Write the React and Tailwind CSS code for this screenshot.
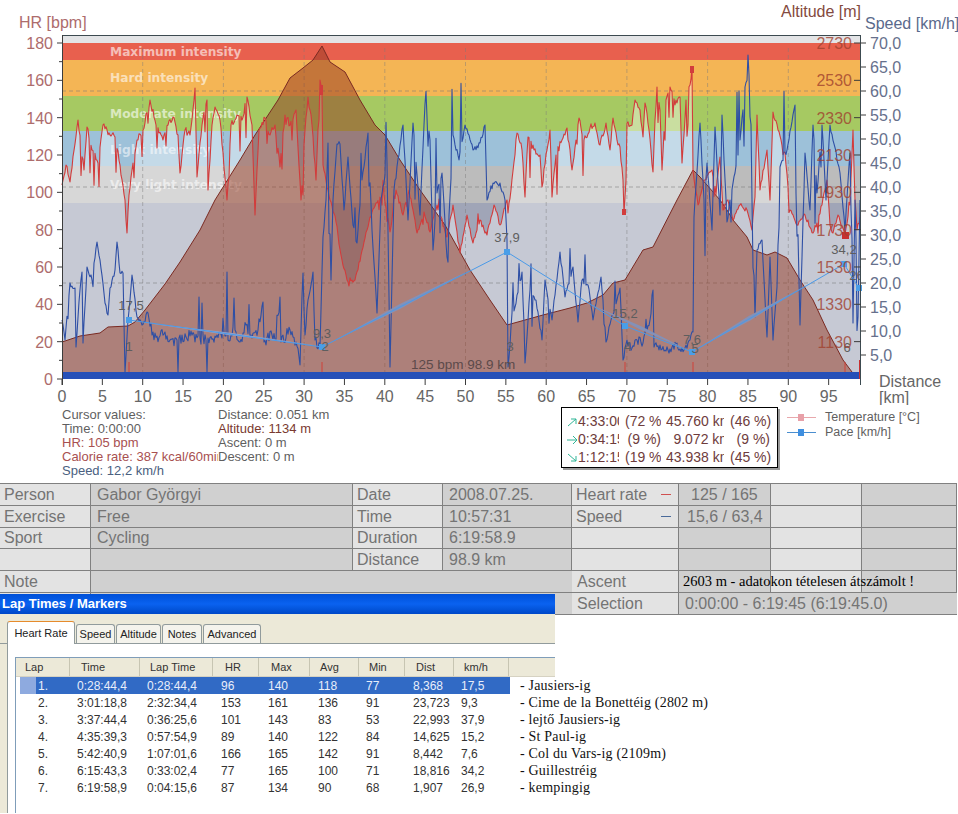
import React from 'react';

const PLOT = { left: 62, right: 861, top: 35, bottom: 379 };

const BANDS = [
  { y: 36, h: 7, fill: '#e3e4e6' },
  { y: 43, h: 17, fill: '#e8604e' },
  { y: 60, h: 36, fill: '#f4b555' },
  { y: 96, h: 35, fill: '#a6c962' },
  { y: 131, h: 35, fill: '#9dc1d9' },
  { y: 166, h: 37, fill: '#bcbcbc' },
  { y: 203, h: 176, fill: '#a0a5b7' },
];

const ZONE_LABELS = [
  { text: 'Maximum intensity', y: 56, o: 0.6 },
  { text: 'Hard intensity', y: 82, o: 0.6 },
  { text: 'Moderate intensity', y: 118, o: 0.6 },
  { text: 'Light intensity', y: 154, o: 0.55 },
  { text: 'Very light intensity', y: 189, o: 0.55 },
];

const ALTITUDE = [[62,342],[80,336],[100,333],[108,327],[128,326],[135,322],[145,310],[165,284],[180,262],[200,230],[215,200],[240,160],[255,135],[278,100],[290,78],[303,68],[313,60],[322,46],[330,62],[345,72],[360,100],[375,125],[385,135],[400,160],[420,190],[445,225],[470,270],[490,300],[507,325],[525,320],[543,315],[570,308],[587,303],[603,295],[613,283],[625,280],[643,250],[653,247],[677,200],[693,170],[700,177],[720,200],[727,210],[733,220],[747,237],[753,250],[767,255],[775,252],[787,258],[800,280],[813,300],[827,330],[843,360],[852,372]];

const HR_KEYS = [[62,185],[66,165],[70,182],[78,120],[84,170],[87,127],[92,150],[98,163],[103,125],[110,135],[115,137],[120,165],[125,200],[127,233],[129,195],[132,170],[137,140],[143,130],[150,100],[156,125],[163,140],[168,125],[173,117],[178,135],[180,173],[185,130],[190,135],[195,88],[197,177],[202,125],[207,100],[208,190],[212,125],[215,107],[220,120],[227,200],[231,125],[237,115],[242,120],[247,97],[252,125],[255,215],[259,130],[265,118],[270,135],[275,125],[280,167],[285,115],[290,125],[296,110],[301,200],[305,130],[308,97],[312,125],[316,180],[320,80],[322,95],[323,165],[330,200],[336,222],[341,255],[347,280],[355,280],[361,255],[367,230],[372,212],[377,203],[384,195],[390,232],[396,190],[403,215],[409,190],[417,233],[424,212],[430,232],[437,205],[447,237],[453,205],[460,253],[467,215],[473,243],[480,220],[487,235],[494,205],[500,225],[507,200],[508,213],[511,190],[517,133],[522,150],[525,197],[528,137],[534,150],[540,155],[542,187],[547,150],[550,130],[552,197],[556,155],[562,140],[567,128],[572,170],[576,140],[579,118],[584,140],[590,128],[595,123],[600,145],[606,123],[610,150],[613,118],[618,145],[620,147],[623,180],[624,213],[626,180],[627,123],[632,125],[635,100],[640,110],[643,137],[645,103],[649,130],[653,172],[655,120],[657,87],[660,110],[662,170],[666,100],[670,87],[675,105],[680,97],[682,163],[686,100],[690,85],[692,67],[693,170],[698,205],[704,180],[712,170],[716,195],[720,157],[723,210],[728,200],[733,220],[740,205],[747,210],[752,230],[755,197],[757,115],[760,190],[767,150],[770,200],[773,112],[778,130],[785,153],[790,210],[797,225],[805,215],[813,233],[817,223],[822,205],[827,180],[830,225],[833,233],[838,215],[845,235],[850,205],[853,130],[855,200],[857,230],[860,217]];

const SPEED_KEYS = [[62,320],[65,340],[70,283],[75,288],[76,347],[80,290],[82,272],[83,343],[87,267],[92,280],[97,242],[100,260],[105,303],[108,315],[110,288],[115,270],[117,242],[120,273],[123,273],[125,372],[128,320],[132,275],[137,317],[142,325],[148,313],[152,335],[160,336],[165,332],[170,340],[177,340],[178,372],[179,338],[190,336],[198,336],[199,297],[200,338],[206,340],[207,372],[208,338],[222,338],[226,336],[227,272],[228,340],[235,330],[240,342],[246,325],[252,338],[258,330],[263,302],[264,342],[272,335],[276,340],[280,297],[281,342],[290,330],[296,342],[300,365],[301,330],[303,273],[305,335],[308,300],[313,272],[315,340],[320,347],[323,237],[326,200],[328,143],[331,280],[333,200],[337,144],[340,144],[344,210],[348,157],[353,225],[357,243],[362,180],[368,133],[372,230],[377,313],[381,200],[387,163],[390,367],[394,190],[403,125],[408,220],[413,123],[420,215],[425,104],[430,140],[433,250],[437,193],[442,173],[447,257],[453,135],[459,160],[465,125],[473,150],[480,143],[485,125],[487,200],[493,183],[500,183],[505,200],[507,240],[508,367],[510,345],[512,313],[515,307],[522,272],[525,363],[530,290],[536,300],[542,340],[545,280],[552,320],[560,252],[565,297],[573,267],[578,322],[582,280],[588,285],[593,320],[601,277],[606,342],[611,320],[620,288],[623,360],[627,340],[632,348],[637,340],[643,343],[650,320],[653,290],[654,347],[660,345],[668,350],[676,344],[684,350],[690,340],[693,332],[694,217],[695,200],[700,123],[704,200],[707,163],[712,230],[715,127],[720,215],[722,115],[727,222],[730,200],[735,173],[740,140],[745,87],[749,75],[752,200],[755,317],[757,250],[762,240],[767,337],[770,257],[773,340],[777,287],[780,167],[787,150],[795,105],[800,325],[805,153],[810,210],[813,125],[817,193],[822,125],[826,200],[830,125],[840,173],[845,230],[850,153],[853,323],[855,200],[858,317],[860,200]];

const PACE = [[129,320],[322,347],[507,252],[625,326],[692,352],[844,264],[859,288]];

const PACE_SHADE = [
  { a: [140,322], b: [320,346], w: 2.5, fill: '#93a3cd' },
  { a: [330,343], b: [470,270], w: 4.5, fill: '#8491b8' },
  { a: [590,304], b: [692,352], w: 3.5, fill: '#8491b8' },
  { a: [695,350], b: [805,286], w: 4.5, fill: '#8491b8' },
];

const LAP_MARKS = [
  { x: 131, y: 310, text: '17,5' }, { x: 129, y: 351, text: '1' },
  { x: 322, y: 338, text: '9,3' }, { x: 325, y: 351, text: '2' },
  { x: 507, y: 242, text: '37,9' }, { x: 510, y: 351, text: '3' },
  { x: 625, y: 318, text: '15,2' }, { x: 628, y: 351, text: '4' },
  { x: 692, y: 344, text: '7,6' }, { x: 695, y: 353, text: '5' },
  { x: 844, y: 254, text: '34,2' }, { x: 847, y: 352, text: '6' },
  { x: 862, y: 280, text: '26,9' },
];

const rng = (seed) => () => {
  seed = (seed + 0x6d2b79f5) | 0;
  let t = Math.imul(seed ^ (seed >>> 15), 1 | seed);
  t = (t + Math.imul(t ^ (t >>> 7), 61 | t)) ^ t;
  return ((t ^ (t >>> 14)) >>> 0) / 4294967296;
};

// interpolates between traced key points and adds sensor noise and short spikes
const trace = (keys, seed, noiseAt) => {
  const rand = rng(seed);
  const out = [];
  keys.forEach((p, i) => {
    const next = keys[i + 1];
    if (!next) {
      out.push(p);
      return;
    }
    const steps = Math.max(1, Math.round(next[0] - p[0]));
    for (let s = 0; s < steps; s++) {
      const x = p[0] + ((next[0] - p[0]) * s) / steps;
      const y = p[1] + ((next[1] - p[1]) * s) / steps;
      const { jitter, chance, min, max, dir } = noiseAt(x);
      let d = s === 0 ? 0 : (rand() - 0.5) * 2 * jitter;
      if (s > 0 && rand() < chance) {
        const size = min + rand() * (max - min);
        d += dir === 0 ? (rand() < 0.5 ? size : -size) : size * dir;
      }
      out.push([+x.toFixed(1), +(y + d).toFixed(1)]);
    }
  });
  return out;
};

const toPoints = (list) => list.map((p) => p.join(',')).join(' ');

const HR_LINE = trace(HR_KEYS, 11, (x) => {
  if (x < 320 || (x > 510 && x < 692)) return { jitter: 3.5, chance: 0.09, min: 10, max: 40, dir: 1 };
  return { jitter: 2.5, chance: 0.05, min: 6, max: 14, dir: 0 };
});

const SPEED_LINE = trace(SPEED_KEYS, 29, (x) => {
  if (x > 150 && x < 320) return { jitter: 6, chance: 0.07, min: 10, max: 32, dir: -1 };
  if (x > 627 && x < 692) return { jitter: 5, chance: 0.04, min: 6, max: 14, dir: -1 };
  if ((x > 325 && x < 505) || x > 696) return { jitter: 3, chance: 0.13, min: 20, max: 70, dir: 0 };
  if (x >= 510) return { jitter: 3, chance: 0.08, min: 10, max: 32, dir: 0 };
  return { jitter: 3, chance: 0.05, min: 8, max: 18, dir: 0 };
});

const taper = ({ a, b, w }) => {
  const mx = (a[0] + b[0]) / 2;
  const my = (a[1] + b[1]) / 2;
  const len = Math.hypot(b[0] - a[0], b[1] - a[1]);
  const nx = ((b[1] - a[1]) / len) * (w / 2);
  const ny = ((a[0] - b[0]) / len) * (w / 2);
  return toPoints([a, [mx + nx, my + ny], b, [mx - nx, my - ny]]);
};

const yFor = (i, step) => 43 + i * step;

function Chart() {
  const xLabels = Array.from({ length: 20 }, (_, i) => i * 5);
  const xOf = (km) => PLOT.left + km * 8.07;

  return (
    <svg width="958" height="405" viewBox="0 0 958 405" className="block text-[16px]">
      <defs>
        <clipPath id="plot-area">
          <rect x={PLOT.left} y={PLOT.top} width={PLOT.right - PLOT.left} height={PLOT.bottom - PLOT.top} />
        </clipPath>
      </defs>

      {BANDS.map((b) => (
        <rect key={b.y} x={PLOT.left} y={b.y} width={PLOT.right - PLOT.left} height={b.h} fill={b.fill} />
      ))}

      {ZONE_LABELS.map((z) => (
        <text
          key={z.text}
          x="110"
          y={z.y}
          fill="#ffffff"
          fillOpacity={z.o}
          className="font-['DejaVu_Sans',sans-serif] text-[12.2px] font-bold"
        >
          {z.text}
        </text>
      ))}

      {/* everything under the HR line is washed out */}
      <polygon
        points={`${PLOT.left},${PLOT.bottom} ${toPoints(HR_LINE)} ${PLOT.right},${PLOT.bottom}`}
        fill="#ffffff"
        fillOpacity="0.4"
      />

      {[91, 187, 283].map((y) => (
        <line key={y} x1={PLOT.left} x2={PLOT.right} y1={y} y2={y} stroke="#7a7a7a" strokeOpacity="0.55" strokeDasharray="4 3" />
      ))}
      {Array.from({ length: 9 }, (_, i) => (i + 1) * 10).map((km) => (
        <line key={km} x1={xOf(km)} x2={xOf(km)} y1="48" y2={PLOT.bottom} stroke="#7a7a7a" strokeOpacity="0.45" strokeDasharray="4 3" />
      ))}

      <polygon
        points={`${PLOT.left},${PLOT.bottom} ${toPoints(ALTITUDE)} 858,${PLOT.bottom}`}
        fill="#94371f"
        fillOpacity="0.5"
      />
      <polyline points={toPoints(ALTITUDE)} fill="none" stroke="#7a2a22" strokeWidth="1" />

      {[129, 322, 625, 693, 845].map((x) => (
        <line key={x} x1={x} x2={x} y1="362" y2="372" stroke="#d04038" strokeWidth="1" />
      ))}

      <polyline points={toPoints(HR_LINE)} fill="none" stroke="#d23c3c" strokeWidth="1.1" strokeLinejoin="round" />
      <rect x="320" y="85" width="3" height="10" fill="#d23c3c" />
      <rect x="622" y="209" width="4" height="6" fill="#d23c3c" />
      <rect x="690" y="66" width="4" height="7" fill="#d23c3c" />
      <rect x="842" y="232" width="7" height="7" fill="#c83030" />

      <rect x={PLOT.left} y="372" width="797" height="7" fill="#2650b8" />

      <polyline points={toPoints(SPEED_LINE)} fill="none" stroke="#2e4fa5" strokeWidth="1.1" strokeLinejoin="round" />

      {PACE_SHADE.map((s) => (
        <polygon key={s.a[0]} points={taper(s)} fill={s.fill} />
      ))}
      <polyline points={toPoints(PACE)} fill="none" stroke="#4a9ae8" strokeWidth="1" />
      {PACE.map(([x, y]) => (
        <rect key={x} x={x - 3} y={y - 3} width="6" height="6" fill="#4a9ee8" />
      ))}

      <g className="text-[13px]" fill="#5e5e5e" clipPath="url(#plot-area)">
        {LAP_MARKS.map((m) => (
          <text key={m.text} x={m.x} y={m.y} textAnchor="middle">{m.text}</text>
        ))}
        <text x="411" y="369" fill="#5c4a4a" className="text-[13.5px]">125 bpm 98.9 km</text>
      </g>

      {/* frame and axes */}
      <line x1={PLOT.left} x2={PLOT.right} y1={PLOT.top + 0.5} y2={PLOT.top + 0.5} stroke="#3c4a50" />
      <line x1={PLOT.left + 0.5} x2={PLOT.left + 0.5} y1={PLOT.top} y2={PLOT.bottom + 6} stroke="#3c3c3c" />
      <line x1={PLOT.right - 0.5} x2={PLOT.right - 0.5} y1={PLOT.top} y2={PLOT.bottom + 6} stroke="#3c4a50" />
      <line x1={PLOT.right - 1.5} x2={PLOT.right - 1.5} y1="360" y2={PLOT.bottom} stroke="#c83030" />

      {Array.from({ length: 19 }, (_, i) => (
        <line key={i} x1={i % 2 ? 59 : 57} x2={PLOT.left} y1={yFor(i, 18.667)} y2={yFor(i, 18.667)} stroke="#3c3c3c" />
      ))}
      {Array.from({ length: 10 }, (_, i) => (
        <text key={i} x="53" y={yFor(i, 37.33) + 6} fill="#ad6c6c" textAnchor="end">{180 - i * 20}</text>
      ))}

      {xLabels.map((km) => (
        <g key={km}>
          <line x1={xOf(km)} x2={xOf(km)} y1={PLOT.bottom} y2={PLOT.bottom + 6} stroke="#3c3c3c" />
          <text x={xOf(km)} y="402" fill="#666666" textAnchor="middle">{km}</text>
        </g>
      ))}

      {Array.from({ length: 9 }, (_, i) => (
        <g key={i}>
          <line x1="854" x2={PLOT.right} y1={yFor(i, 37.33)} y2={yFor(i, 37.33)} stroke="#3c3c3c" />
          <text x="852" y={yFor(i, 37.33) + 6} fill="#a0402e" fillOpacity="0.8" textAnchor="end">{2730 - i * 200}</text>
        </g>
      ))}
      {Array.from({ length: 14 }, (_, i) => (
        <g key={i}>
          <line x1={PLOT.right} x2="866" y1={yFor(i, 24)} y2={yFor(i, 24)} stroke="#3c3c3c" />
          <text x="870" y={yFor(i, 24) + 6} fill="#66708c">{(70 - i * 5).toFixed(1).replace('.', ',')}</text>
        </g>
      ))}

      <text x="19" y="28" fill="#ad6c6c">HR [bpm]</text>
      <text x="781" y="17" fill="#844a40">Altitude [m]</text>
      <text x="865" y="29" fill="#5a6a8c">Speed [km/h]</text>
      <text x="879" y="387" fill="#666666">Distance</text>
      <text x="879" y="403" fill="#666666">[km]</text>
    </svg>
  );
}

function CursorValues() {
  return (
    <div className="ml-[62px] flex w-[156px] shrink-0 flex-col pt-[3px] text-[13px] leading-[14px] text-[#5f5f5f]">
      <span>Cursor values:</span>
      <span>Time: 0:00:00</span>
      <span className="text-[#a85050]">HR: 105 bpm</span>
      <span className="overflow-hidden whitespace-nowrap text-[#a85050]">Calorie rate: 387 kcal/60min</span>
      <span className="text-[#4a6080]">Speed: 12,2 km/h</span>
    </div>
  );
}

function CursorValuesRight() {
  return (
    <div className="flex w-[343px] shrink-0 flex-col pt-[3px] text-[13px] leading-[14px] text-[#5f5f5f]">
      <span>Distance: 0.051 km</span>
      <span className="text-[#7a3a30]">Altitude: 1134 m</span>
      <span>Ascent: 0 m</span>
      <span>Descent: 0 m</span>
    </div>
  );
}

const SPLITS = [
  { time: '4:33:00', pct: '(72 %)', dist: '45.760 km', share: '(46 %)', d: 'M1 9 L9 2 M4 2 L9 2 L9 7' },
  { time: '0:34:15', pct: '(9 %)', dist: '9.072 km', share: '(9 %)', d: 'M0 5 L10 5 M6 1 L10 5 L6 9' },
  { time: '1:12:15', pct: '(19 %)', dist: '43.938 km', share: '(45 %)', d: 'M1 1 L9 8 M9 3 L9 8 L4 8' },
];

function SplitBox() {
  return (
    <div className="mt-[2px] flex h-[61px] w-[217px] shrink-0 flex-col justify-center gap-[1px] border border-black bg-white pt-[4px] text-[14px] leading-[17px] text-[#6e3c3c] shadow-[2px_2px_0_#9a9a9a]">
      {SPLITS.map((row) => (
        <div key={row.time} className="flex items-center">
          <svg width="10" height="10" viewBox="0 0 10 10" className="ml-[5px] mr-[1px] shrink-0" fill="none" stroke="#2fb596">
            <path d={row.d} />
          </svg>
          <span className="w-[41px] shrink-0 overflow-hidden whitespace-nowrap">{row.time}</span>
          <span className="ml-[6px] w-[36px] shrink-0 overflow-hidden whitespace-nowrap text-right">{row.pct}</span>
          <span className="ml-[5px] w-[58px] shrink-0 overflow-hidden">
            <span className="block w-[65px] whitespace-nowrap text-right">{row.dist}</span>
          </span>
          <span className="ml-[6px] w-[40px] shrink-0 whitespace-nowrap text-right">{row.share}</span>
        </div>
      ))}
    </div>
  );
}

function Legend() {
  return (
    <div className="ml-[9px] flex flex-col pt-[5px] text-[12.5px] leading-[15px] text-[#5f5f5f]">
      <div className="flex items-center gap-[9px]">
        <svg width="29" height="9" viewBox="0 0 29 9">
          <line x1="0" x2="29" y1="4.5" y2="4.5" stroke="#e8a8ac" />
          <rect x="11" y="1" width="6" height="7" fill="#e8a0a8" />
        </svg>
        <span>Temperature [°C]</span>
      </div>
      <div className="flex items-center gap-[9px]">
        <svg width="29" height="9" viewBox="0 0 29 9">
          <line x1="0" x2="29" y1="4.5" y2="4.5" stroke="#4a8ecf" />
          <rect x="11" y="1" width="6" height="7" fill="#3f8fe0" />
        </svg>
        <span>Pace [km/h]</span>
      </div>
    </div>
  );
}

function Cell({ dark, children, className = '' }) {
  return (
    <div
      className={`flex items-center overflow-visible whitespace-nowrap border-b border-r border-[#808080] pl-[4px] text-[16px] leading-none text-[#747474] ${dark ? 'bg-[#d0d0d0]' : 'bg-[#e3e3e3]'} ${className}`}
    >
      {children}
    </div>
  );
}

function SummaryTable() {
  return (
    <div className="grid h-[131px] w-[957px] grid-cols-[91px_262px_90px_129px_107px_92px_91px_95px] grid-rows-[22px_22px_21px_22px_22px_22px] border-t border-[#808080]">
      <Cell>Person</Cell>
      <Cell dark className="pl-[6px]">Gabor Györgyi</Cell>
      <Cell>Date</Cell>
      <Cell dark className="pl-[6px]">2008.07.25.</Cell>
      <Cell className="justify-between pr-[7px]">
        <span>Heart rate</span>
        <span className="h-px w-[10px] bg-[#d05050]" />
      </Cell>
      <Cell dark className="pl-[12px]">125 / 165</Cell>
      <Cell />
      <Cell dark />

      <Cell>Exercise</Cell>
      <Cell dark className="pl-[6px]">Free</Cell>
      <Cell>Time</Cell>
      <Cell dark className="pl-[6px]">10:57:31</Cell>
      <Cell className="justify-between pr-[7px]">
        <span>Speed</span>
        <span className="h-px w-[10px] bg-[#4a6a9a]" />
      </Cell>
      <Cell dark className="pl-[8px]">15,6 / 63,4</Cell>
      <Cell />
      <Cell dark />

      <Cell>Sport</Cell>
      <Cell dark className="pl-[6px]">Cycling</Cell>
      <Cell>Duration</Cell>
      <Cell dark className="pl-[6px]">6:19:58.9</Cell>
      <Cell />
      <Cell dark />
      <Cell />
      <Cell dark />

      <Cell />
      <Cell dark />
      <Cell>Distance</Cell>
      <Cell dark className="pl-[6px]">98.9 km</Cell>
      <Cell />
      <Cell dark />
      <Cell />
      <Cell dark />

      <Cell>Note</Cell>
      <Cell dark className="col-span-3 border-r-0" />
      <Cell className="pl-[5px]">Ascent</Cell>
      <Cell dark className="pl-[3px]">
        <span className="relative z-10 font-['Liberation_Serif',serif] text-[14.5px] text-black">2603 m - adatokon tételesen átszámolt !</span>
      </Cell>
      <Cell />
      <Cell dark />

      <Cell className="border-b-0" />
      <Cell dark className="col-span-3 border-r-0" />
      <Cell className="pl-[5px]">Selection</Cell>
      <Cell dark className="col-span-3 border-r-0 pl-[6px]">0:00:00 - 6:19:45 (6:19:45.0)</Cell>
    </div>
  );
}

const TABS = [
  { label: 'Speed', w: 'w-[39px]' },
  { label: 'Altitude', w: 'w-[45px]' },
  { label: 'Notes', w: 'w-[40px]' },
  { label: 'Advanced', w: 'w-[58px]' },
];

const HEADERS = [
  { label: 'Lap', w: 'w-[54px]', pl: 'pl-[9px]' },
  { label: 'Time', w: 'w-[70px]', pl: 'pl-[11px]' },
  { label: 'Lap Time', w: 'w-[73px]', pl: 'pl-[10px]' },
  { label: 'HR', w: 'w-[46px]', pl: 'pl-[12px]' },
  { label: 'Max', w: 'w-[51px]', pl: 'pl-[12px]' },
  { label: 'Avg', w: 'w-[49px]', pl: 'pl-[10px]' },
  { label: 'Min', w: 'w-[46px]', pl: 'pl-[10px]' },
  { label: 'Dist', w: 'w-[49px]', pl: 'pl-[11px]' },
  { label: 'km/h', w: 'w-[55px]', pl: 'pl-[10px]' },
];

const LAPS = [
  ['1.', '0:28:44,4', '0:28:44,4', '96', '140', '118', '77', '8,368', '17,5', '- Jausiers-ig'],
  ['2.', '3:01:18,8', '2:32:34,4', '153', '161', '136', '91', '23,723', '9,3', '- Cime de la Bonettéig (2802 m)'],
  ['3.', '3:37:44,4', '0:36:25,6', '101', '143', '83', '53', '22,993', '37,9', '- lejtő Jausiers-ig'],
  ['4.', '4:35:39,3', '0:57:54,9', '89', '140', '122', '84', '14,625', '15,2', '- St Paul-ig'],
  ['5.', '5:42:40,9', '1:07:01,6', '166', '165', '142', '91', '8,442', '7,6', '- Col du Vars-ig (2109m)'],
  ['6.', '6:15:43,3', '0:33:02,4', '77', '165', '100', '71', '18,816', '34,2', '- Guillestréig'],
  ['7.', '6:19:58,9', '0:04:15,6', '87', '134', '90', '68', '1,907', '26,9', '- kempingig'],
];

const LAP_COLS = ['w-[39px]', 'w-[70px]', 'w-[74px]', 'w-[47px]', 'w-[50px]', 'w-[48px]', 'w-[47px]', 'w-[48px]', 'w-[51px]'];

function LapRow({ lap, selected }) {
  const cells = lap.slice(0, 9);
  return (
    <div className="flex h-[17px] items-center whitespace-nowrap text-[12px]">
      <div className={`ml-[4px] h-full w-[16px] shrink-0 ${selected ? 'bg-[#8eaadf]' : ''}`} />
      <div className={`flex h-full items-center ${selected ? 'bg-[#316ac5] text-[#e8eefa]' : 'text-[#333333]'}`}>
        {cells.map((value, i) => (
          <span key={i} className={`${LAP_COLS[i]} pl-[2px]`}>{value}</span>
        ))}
      </div>
      <span className="ml-[10px] font-['Liberation_Serif',serif] text-[14px] tracking-[0.2px] text-[#111111]">{lap[9]}</span>
    </div>
  );
}

function LapPanel() {
  return (
    <div className="relative -mt-[20px] w-[555px]">
      <div className="flex h-[20px] items-center bg-gradient-to-b from-[#0050d8] via-[#0a62f0] to-[#0048c8] pl-[2px] text-[13px] font-bold text-white">
        Lap Times / Markers
      </div>
      <div className="h-[199px] bg-[#ece9d8] pt-[8px]">
        <div className="flex h-[22px] items-end border-b border-[#919b9c] pl-[7px] text-[11px] text-[#222222]">
          <div className="relative top-px flex h-[23px] w-[68px] items-center justify-center rounded-t-[3px] border border-b-0 border-[#919b9c] border-t-[#e68b2c] bg-white">
            Heart Rate
          </div>
          <div className="ml-[1px] flex gap-[1px]">
            {TABS.map((t) => (
              <div key={t.label} className={`flex h-[19px] ${t.w} items-center justify-center rounded-t-[3px] border border-b-0 border-[#919b9c] bg-[#f4f3ec]`}>
                {t.label}
              </div>
            ))}
          </div>
        </div>
        <div className="ml-[7px] h-[169px] border-l border-[#919b9c] bg-white pl-[7px] pt-[13px]">
          <div className="h-[156px] border-l border-t border-[#7f9db9]">
            <div className="flex h-[19px] border-b border-[#d6d2c2] bg-[#ece9d8] text-[11px] text-[#333333]">
              {HEADERS.map((h) => (
                <div key={h.label} className={`flex items-center border-r border-[#c7c5b2] ${h.w} ${h.pl}`}>{h.label}</div>
              ))}
            </div>
            {LAPS.map((lap, i) => (
              <LapRow key={lap[0]} lap={lap} selected={i === 0} />
            ))}
          </div>
        </div>
      </div>
    </div>
  );
}

export default function App() {
  return (
    <div className="h-[814px] w-[958px] overflow-hidden bg-white font-['Liberation_Sans',Arial,sans-serif]">
      <Chart />
      <div className="flex h-[78px]">
        <CursorValues />
        <CursorValuesRight />
        <SplitBox />
        <Legend />
      </div>
      <SummaryTable />
      <LapPanel />
    </div>
  );
}
